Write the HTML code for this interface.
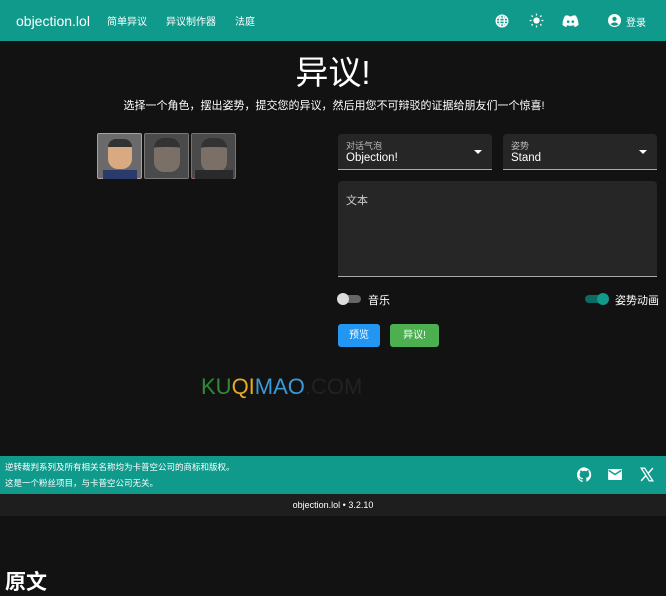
<!DOCTYPE html>
<html><head><meta charset="utf-8"><style>
*{box-sizing:border-box;margin:0;padding:0}
body{width:666px;height:593px;background:#121212;font-family:"Liberation Sans","Noto Sans CJK SC",sans-serif;color:#fff;position:relative;overflow:hidden}
.a{position:absolute}
.hdr{left:0;top:0;width:666px;height:41px;background:#0f9a8c}
.sel{background:#262626;border-bottom:1px solid #aaa;border-radius:4px 4px 0 0}
.lbl{font-size:9px;color:#bbb;left:8px;top:5px}
.val{font-size:11.5px;left:8px;top:18px}
.arr{right:10px;top:16px;width:0;height:0;border-left:4px solid transparent;border-right:4px solid transparent;border-top:4px solid #fff}
.av{top:133px;width:45px;height:46px;border:1px solid #777;border-radius:2px;background:#4a4a4a}
</style></head><body>
<div class="a hdr"></div>
<div class="a" style="left:16px;top:13px;font-size:14px">objection.lol</div>
<div class="a" style="left:107px;top:13px;font-size:10px">简单异议</div>
<div class="a" style="left:166px;top:13px;font-size:10px">异议制作器</div>
<div class="a" style="left:235px;top:13px;font-size:10px">法庭</div>
<svg class="a" style="left:495px;top:14px" width="14" height="14" viewBox="0 0 24 24" fill="none" stroke="#fff" stroke-width="2.2"><circle cx="12" cy="12" r="10"/><ellipse cx="12" cy="12" rx="4" ry="10"/><path d="M2 12h20M4 7h16M4 17h16"/></svg>
<svg class="a" style="left:529px;top:13px" width="15" height="15" viewBox="0 0 24 24" fill="#fff" stroke="#fff" stroke-width="2"><circle cx="12" cy="12" r="4"/><path d="M12 1v3M12 20v3M1 12h3M20 12h3M4 4l2 2M18 18l2 2M4 20l2-2M18 6l2-2"/></svg>
<svg class="a" style="left:562px;top:15px" width="17" height="12" viewBox="0 0 24 18" fill="#fff"><path d="M4 1Q8 0 9 1L10 2Q12 1.8 14 2L15 1Q18 0 20 1Q24 7 24 15Q21 17.5 18 18L17 16Q19 15 19.5 14.5Q12 18 4.5 14.5Q5 15 7 16L6 18Q3 17.5 0 15Q0 7 4 1Z"/><circle cx="8.5" cy="10" r="2" fill="#0f9a8c"/><circle cx="15.5" cy="10" r="2" fill="#0f9a8c"/></svg>
<svg class="a" style="left:608px;top:14px" width="13" height="13" viewBox="0 0 24 24"><circle cx="12" cy="12" r="12" fill="#fff"/><circle cx="12" cy="9" r="4" fill="#0f9a8c"/><path d="M4.5 19Q12 12 19.5 19Q12 25 4.5 19Z" fill="#0f9a8c"/></svg>
<div class="a" style="left:626px;top:14px;font-size:10px">登录</div>
<div class="a" style="left:0;width:666px;top:46px;text-align:center;font-size:33px">异议!</div>
<div class="a" style="left:0;width:666px;top:97px;text-align:center;font-size:11px;padding-left:2px">选择一个角色，摆出姿势，提交您的异议，然后用您不可辩驳的证据给朋友们一个惊喜!</div>
<div class="a av" style="left:97px;background:#6a6a6a;border-color:#b99"><div class="a" style="left:10px;top:5px;width:24px;height:30px;background:#d9a982;border-radius:8px 8px 10px 10px;border-top:8px solid #333"></div><div class="a" style="left:5px;top:36px;width:34px;height:9px;background:#2a3a6a"></div></div>
<div class="a av" style="left:144px"><div class="a" style="left:9px;top:4px;width:26px;height:34px;background:#7a7068;border-radius:10px;border-top:9px solid #333"></div></div>
<div class="a av" style="left:191px;border-color:#966"><div class="a" style="left:9px;top:4px;width:26px;height:34px;background:#7a7068;border-radius:10px;border-top:9px solid #333"></div><div class="a" style="left:3px;top:36px;width:38px;height:9px;background:#2a2a2a"></div></div>
<div class="a sel" style="left:338px;top:134px;width:154px;height:36px"><div class="a lbl">对话气泡</div><div class="a val" style="top:18px">Objection!</div><div class="a arr"></div></div>
<div class="a sel" style="left:503px;top:134px;width:154px;height:36px"><div class="a lbl">姿势</div><div class="a val" style="top:18px">Stand</div><div class="a arr"></div></div>
<div class="a sel" style="left:338px;top:181px;width:319px;height:96px"><div class="a" style="left:8px;top:11px;font-size:11px;color:#ccc">文本</div></div>
<div class="a" style="left:339px;top:295px;width:22px;height:8px;border-radius:4px;background:#666"></div>
<div class="a" style="left:337px;top:293px;width:12px;height:12px;border-radius:6px;background:#ddd"></div>
<div class="a" style="left:368px;top:292px;font-size:11px">音乐</div>
<div class="a" style="left:585px;top:295px;width:22px;height:8px;border-radius:4px;background:#0b6a61"></div>
<div class="a" style="left:597px;top:293px;width:12px;height:12px;border-radius:6px;background:#0f9a8c"></div>
<div class="a" style="left:615px;top:292px;font-size:11px">姿势动画</div>
<div class="a" style="left:338px;top:324px;width:42px;height:23px;background:#2196f3;border-radius:3px;font-size:10px;text-align:center;line-height:23px">预览</div>
<div class="a" style="left:390px;top:324px;width:49px;height:23px;background:#4caf50;border-radius:3px;font-size:10px;text-align:center;line-height:23px">异议!</div>
<div class="a" style="left:201px;top:374px;font-size:22px;letter-spacing:0px"><span style="color:#2e8b3a">KU</span><span style="color:#e8a820">QI</span><span style="color:#3a9ad8">MAO</span><span style="color:#222">.COM</span></div>
<div class="a" style="left:0;top:456px;width:666px;height:38px;background:#0f9a8c"></div>
<div class="a" style="left:5px;top:461px;font-size:8.5px">逆转裁判系列及所有相关名称均为卡普空公司的商标和版权。</div>
<div class="a" style="left:5px;top:477px;font-size:8.5px">这是一个粉丝项目，与卡普空公司无关。</div>
<svg class="a" style="left:577px;top:467px" width="15" height="15" viewBox="0 0 24 24" fill="#fff"><path d="M12 .5a12 12 0 0 0-3.8 23.4c.6.1.8-.3.8-.6v-2c-3.3.7-4-1.6-4-1.6-.6-1.4-1.4-1.8-1.4-1.8-1-.7.1-.7.1-.7 1.2.1 1.8 1.2 1.8 1.2 1 1.8 2.8 1.3 3.5 1 0-.8.4-1.3.7-1.6-2.7-.3-5.5-1.3-5.5-6 0-1.2.5-2.3 1.3-3.1-.2-.4-.6-1.6 0-3.2 0 0 1-.3 3.3 1.2a11.5 11.5 0 0 1 6 0C17.3 4.6 18.3 5 18.3 5c.7 1.6.2 2.8.1 3.2.8.8 1.3 1.9 1.3 3.1 0 4.6-2.8 5.6-5.5 5.9.4.4.8 1.1.8 2.2v3.3c0 .3.2.7.8.6A12 12 0 0 0 12 .5z"/></svg>
<svg class="a" style="left:608px;top:469px" width="14" height="11" viewBox="0 0 20 16"><rect width="20" height="16" rx="1" fill="#fff"/><path d="M1 2l9 6 9-6" fill="none" stroke="#0f9a8c" stroke-width="2"/></svg>
<svg class="a" style="left:640px;top:467px" width="14" height="15" viewBox="0 0 24 24" fill="none" stroke="#fff" stroke-width="2.2"><path d="M2 1h6l14 22h-6z"/><path d="M22 1L14 10M2 23l8-9" stroke-width="2.5"/></svg>
<div class="a" style="left:0;top:494px;width:666px;height:22px;background:#1e1e1e;text-align:center;font-size:9px;line-height:22px">objection.lol • 3.2.10</div>
<div class="a" style="left:5px;top:566px;font-size:21px;font-weight:bold">原文</div>
</body></html>
